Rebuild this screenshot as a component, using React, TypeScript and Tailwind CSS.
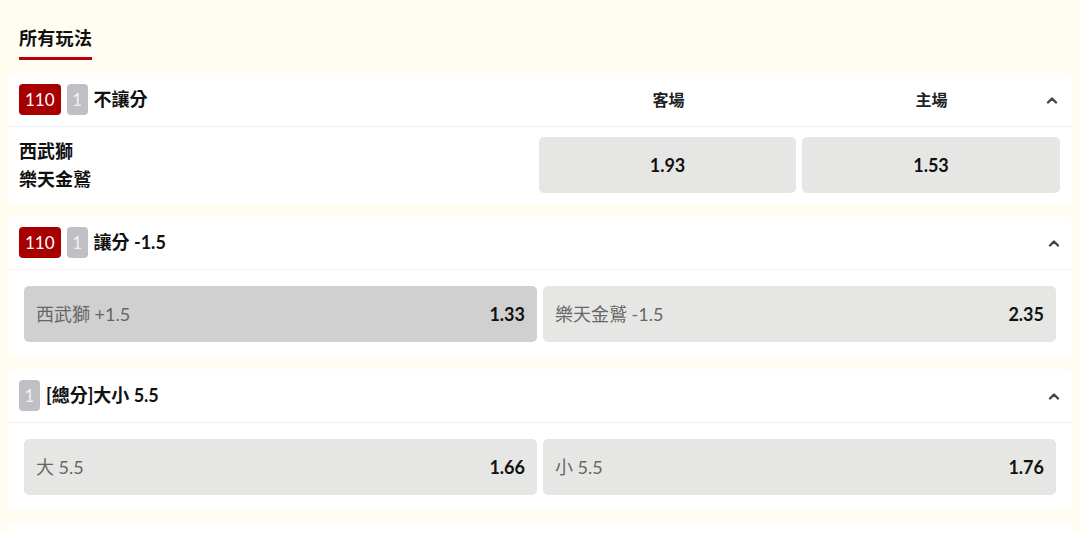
import type { ReactNode } from "react";

const Chevron = () => (
  <svg width="12" height="8" viewBox="0 0 12 8" className="text-[#444]">
    <path d="M2 6.5 L6 2.5 L10 6.5" fill="none" stroke="currentColor" strokeWidth="2.4" strokeLinecap="round" strokeLinejoin="round" />
  </svg>
);

const Badge = ({ children, red }: { children: ReactNode; red?: boolean }) => (
  <span
    className={
      red
        ? "h-[31px] px-[6px] rounded-[4px] bg-[#a80000] text-white text-[17px] leading-[31px]"
        : "h-[31px] w-[21px] text-center rounded-[4px] bg-[#bfbfc4] text-[#f2f2f2] text-[17px] leading-[31px]"
    }
  >
    {children}
  </span>
);

const Header = ({ badges, title, children }: { badges: ReactNode; title: string; children?: ReactNode }) => (
  <div className="flex items-center h-[54px] pl-[11px] pr-[12px] border-b border-[#f0f0f6]">
    <div className="flex flex-1 items-center gap-[6px]">
      {badges}
      <span className="text-[18px] font-bold text-[#111]">{title}</span>
    </div>
    {children}
  </div>
);

const Pick = ({ label, odds, active }: { label: string; odds: string; active?: boolean }) => (
  <div
    className={
      "flex-1 h-[56px] rounded-[5px] flex items-center justify-between px-[12px] " +
      (active ? "bg-[#d0d0d0]" : "bg-[#e6e7e4]")
    }
  >
    <span className="text-[18px] text-[#666]">{label}</span>
    <span className="text-[18px] font-bold text-[#111]">{odds}</span>
  </div>
);

export default function App() {
  return (
    <div className="min-h-screen bg-[#fffdf1] px-2 font-['Lato','Noto_Sans_CJK_TC',sans-serif]">
      <div className="pt-[24px] pl-[11px]">
        <div className="inline-block">
          <div className="text-[18px] font-bold text-[#111] leading-[28px] tracking-[0.3px]">所有玩法</div>
          <div className="mt-[5px] h-[3px] bg-[#b5000f]" />
        </div>
      </div>

      <div className="mt-[13px] flex flex-col gap-[12px]">
        <div className="bg-white rounded-[6px]">
          <div className="flex items-center h-[54px] pl-[11px] pr-[12px] border-b border-[#f0f0f6]">
            <div className="flex flex-1 items-center gap-[6px]">
              <Badge red>110</Badge>
              <Badge>1</Badge>
              <span className="text-[18px] font-bold text-[#111]">不讓分</span>
            </div>
            <div className="flex gap-[6px]">
              <div className="w-[257px] text-center text-[16px] font-bold text-[#222]">客場</div>
              <div className="w-[257px] relative text-center text-[16px] font-bold text-[#222]">
                主場
                <span className="absolute right-[2px] top-1/2 -translate-y-1/2 flex">
                  <Chevron />
                </span>
              </div>
            </div>
          </div>
          <div className="flex items-center pl-[11px] pr-[12px] pt-[10px] pb-[11px]">
            <div className="flex-1 text-[18px] font-bold text-[#111] leading-[28px]">
              <div>西武獅</div>
              <div>樂天金鷲</div>
            </div>
            <div className="flex gap-[6px]">
              <div className="w-[257px] h-[56px] rounded-[5px] bg-[#e6e7e4] flex items-center justify-center text-[18px] font-bold text-[#111]">1.93</div>
              <div className="w-[258px] h-[56px] rounded-[5px] bg-[#e6e7e4] flex items-center justify-center text-[18px] font-bold text-[#111]">1.53</div>
            </div>
          </div>
        </div>

        <div className="bg-white rounded-[6px]">
          <Header
            badges={
              <>
                <Badge red>110</Badge>
                <Badge>1</Badge>
              </>
            }
            title="讓分 -1.5"
          >
            <Chevron />
          </Header>
          <div className="flex gap-[6px] px-[16px] pt-[16px] pb-[15px]">
            <Pick label="西武獅 +1.5" odds="1.33" active />
            <Pick label="樂天金鷲 -1.5" odds="2.35" />
          </div>
        </div>

        <div className="bg-white rounded-[6px]">
          <Header badges={<Badge>1</Badge>} title="[總分]大小 5.5">
            <Chevron />
          </Header>
          <div className="flex gap-[6px] px-[16px] pt-[16px] pb-[15px]">
            <Pick label="大 5.5" odds="1.66" />
            <Pick label="小 5.5" odds="1.76" />
          </div>
        </div>

        <div className="bg-white rounded-[6px] h-[60px]" />
      </div>
    </div>
  );
}
